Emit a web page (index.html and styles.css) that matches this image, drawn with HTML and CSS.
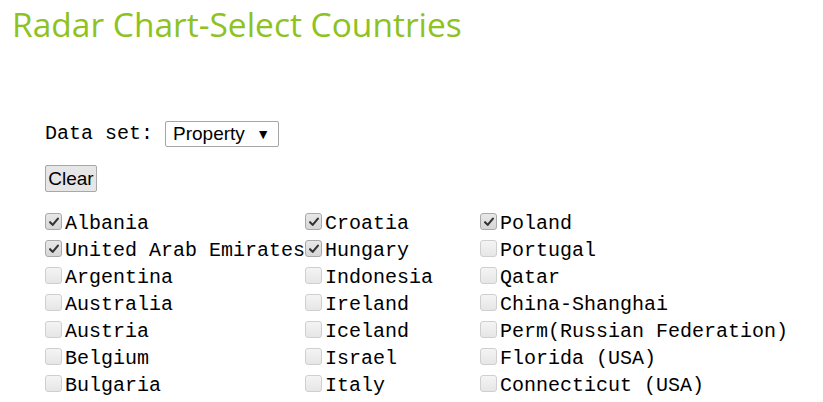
FILE: index.html
```html
<!DOCTYPE html>
<html>
<head>
<meta charset="utf-8">
<link rel="stylesheet" href="styles.css">
</head>
<body>
<h1 class="title">Radar Chart-Select Countries</h1>
<div class="panel">
  <div class="dataset">
    <span class="label">Data set:</span>
    <span class="select"><span class="select-text">Property</span><span class="arrow">▼</span></span>
  </div>
  <div class="clear-row"><button class="btn">Clear</button></div>
  <div class="countries">
    <label class="item"><span class="box on"></span>Albania</label>
    <label class="item"><span class="box on"></span>United Arab Emirates</label>
    <label class="item"><span class="box"></span>Argentina</label>
    <label class="item"><span class="box"></span>Australia</label>
    <label class="item"><span class="box"></span>Austria</label>
    <label class="item"><span class="box"></span>Belgium</label>
    <label class="item"><span class="box"></span>Bulgaria</label>
    <label class="item"><span class="box"></span>Brazil</label>

    <label class="item"><span class="box on"></span>Croatia</label>
    <label class="item"><span class="box on"></span>Hungary</label>
    <label class="item"><span class="box"></span>Indonesia</label>
    <label class="item"><span class="box"></span>Ireland</label>
    <label class="item"><span class="box"></span>Iceland</label>
    <label class="item"><span class="box"></span>Israel</label>
    <label class="item"><span class="box"></span>Italy</label>
    <label class="item"><span class="box"></span>Jordan</label>

    <label class="item"><span class="box on"></span>Poland</label>
    <label class="item"><span class="box"></span>Portugal</label>
    <label class="item"><span class="box"></span>Qatar</label>
    <label class="item"><span class="box"></span>China-Shanghai</label>
    <label class="item"><span class="box"></span>Perm(Russian Federation)</label>
    <label class="item"><span class="box"></span>Florida (USA)</label>
    <label class="item"><span class="box"></span>Connecticut (USA)</label>
    <label class="item"><span class="box"></span>Puerto Rico (USA)</label>
  </div>
</div>
</body>
</html>
```

FILE: styles.css
```css
html, body {
  margin: 0;
  padding: 0;
  background: #ffffff;
  overflow: hidden;
}
body {
  padding: 0 8px;
  font-family: "Liberation Mono", monospace;
  font-size: 20px;
  color: #000;
}
.title {
  margin: 0;
  padding: 2px 0 0 4px;
  font-family: "Open Sans", sans-serif;
  font-weight: 400;
  font-size: 33.5px;
  line-height: 44px;
  color: #8dc21f;
}
.panel {
  padding: 75px 0 0 37px;
}
.dataset {
  display: flex;
  align-items: center;
  height: 25px;
}
.label {
  margin-right: 12px;
}
.select {
  display: flex;
  align-items: center;
  justify-content: space-between;
  box-sizing: border-box;
  width: 114px;
  height: 26px;
  border: 1px solid #a6a6a6;
  border-radius: 2px;
  padding: 0 8px 0 7px;
  font-family: "Liberation Sans", Arial, sans-serif;
  font-size: 19px;
}
.arrow {
  font-size: 14px;
}
.clear-row {
  margin-top: 19px;
  height: 27px;
}
.btn {
  box-sizing: border-box;
  width: 52px;
  height: 27px;
  padding: 0;
  border: 1px solid #a8a8a8;
  border-radius: 2px;
  background: #e6e6e6;
  font-family: "Liberation Sans", Arial, sans-serif;
  font-size: 19px;
  color: #000;
}
.countries {
  margin-top: 18px;
  display: grid;
  grid-template-columns: 260px 175px auto;
  grid-template-rows: repeat(8, 27px);
  grid-auto-flow: column;
}
.item {
  display: flex;
  align-items: flex-start;
  white-space: nowrap;
  line-height: 27px;
}
.box {
  box-sizing: border-box;
  width: 17px;
  height: 17px;
  margin: 3px 3px 0 0;
  border: 1px solid #cfcfcf;
  border-radius: 3px;
  background: linear-gradient(#f4f4f4, #e6e6e6);
  flex: none;
}
.box.on {
  border-color: #a9a9a9;
  background: url("data:image/svg+xml;utf8,<svg xmlns='http://www.w3.org/2000/svg' viewBox='0 0 16 16'><path d='M3.5 8.2 L6.5 11.3 L12.5 4.2' fill='none' stroke='%23333' stroke-width='2.4' stroke-linecap='round' stroke-linejoin='round'/></svg>") center/14px 14px no-repeat, linear-gradient(#e8e8e8, #d6d6d6);
}
```
